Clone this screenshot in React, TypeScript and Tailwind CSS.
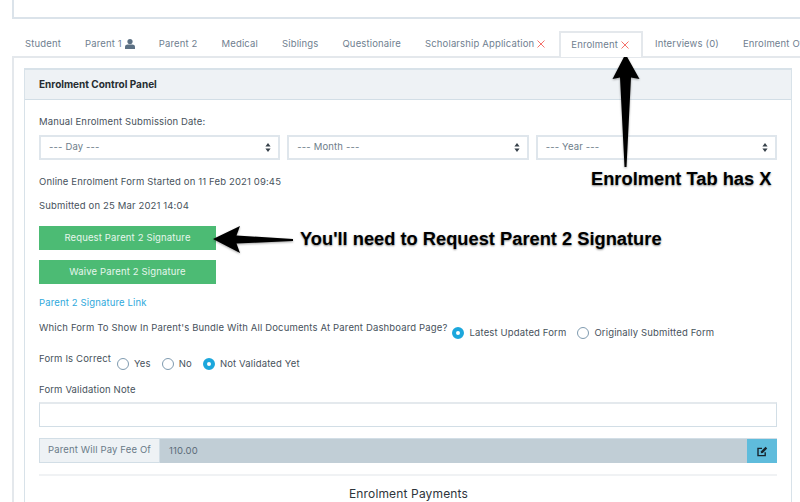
import React from "react";

const tabs = ["Student", "Parent 1", "Parent 2", "Medical", "Siblings", "Questionaire", "Scholarship Application", "Enrolment", "Interviews (0)", "Enrolment Off"];

const SelectBox = ({ label }: { label: string }) => (
  <div className="flex-1 h-[25px] border-2 border-[#dfe6ec] flex items-center justify-between pl-[8px] pr-[7px] text-[#6d7d8a]">
    <span>{label}</span>
    <svg width="6" height="9" viewBox="0 0 6 9" fill="#37414a">
      <path d="M3 0 L5.6 3.4 H0.4 Z M3 9 L5.6 5.6 H0.4 Z" />
    </svg>
  </div>
);

const Radio = ({ on, label }: { on?: boolean; label: string }) => (
  <span className="flex items-center gap-[5px]">
    {on ? (
      <span className="w-[12px] h-[12px] rounded-full border-[4px] border-[#1ca7dc] bg-white" />
    ) : (
      <span className="w-[12px] h-[12px] rounded-full border border-[#7f9bb0] bg-white" />
    )}
    <span>{label}</span>
  </span>
);

const Cross = () => (
  <svg width="8" height="8" viewBox="0 0 8 8" stroke="#f4726c" strokeWidth="1" className="ml-[3px]">
    <path d="M0.5 0.5 L7.5 7.5 M7.5 0.5 L0.5 7.5" />
  </svg>
);

const App = () => {
  return (
    <div className="relative w-[800px] h-[502px] overflow-hidden bg-white text-[9.5px] text-[#47525c] font-['Inter',sans-serif] tracking-[0.15px]">
      {/* top card */}
      <div className="ml-[12px] h-[19px] border-l-2 border-b-2 border-[#dbe3ea]" />

      {/* tabs */}
      <div className="flex ml-[13px] mt-[12px] h-[25px] whitespace-nowrap text-[#6f8090]">
        {tabs.map((t) => (
          <div
            key={t}
            className={
              t === "Enrolment"
                ? "flex items-center pl-[10px] pr-[12px] bg-white border-2 border-b-0 border-[#e4e8ec] h-[26px] relative z-10"
                : t === "Scholarship Application"
                  ? "flex items-center pl-[12px] pr-[14px] pt-[1px]"
                  : "flex items-center px-[12px] pt-[1px]"
            }
          >
            <span>{t}</span>
            {t === "Parent 1" && (
              <svg width="10" height="10" viewBox="0 0 10 10" fill="#5b7083" className="ml-[3px] -mt-[1px]">
                <circle cx="5" cy="2.6" r="2.6" />
                <path d="M0 10 V8 C0 6.4 1.4 5.6 2.6 5.6 H7.4 C8.6 5.6 10 6.4 10 8 V10 Z" />
              </svg>
            )}
            {(t === "Scholarship Application" || t === "Enrolment") && <Cross />}
          </div>
        ))}
      </div>

      {/* tab content */}
      <div className="ml-[12px] border-l-2 border-t-2 border-[#e4e8ec] pl-[10px] pt-[10px] h-[460px]">
        <div className="w-[768px] h-[450px] border-l border-r border-t-2 border-[#d8e2e9]">
          <div className="h-[30px] bg-[#eef2f5] border-b border-[#d2dee6] flex items-center pl-[14px] font-bold text-[#262c31] text-[10px] tracking-normal">
            Enrolment Control Panel
          </div>
          <div className="px-[14px] pt-[15px]">
            <p className="leading-[14px]">Manual Enrolment Submission Date:</p>
            <div className="flex gap-[7px] mt-[6px] w-[738px]">
              <SelectBox label="--- Day ---" />
              <SelectBox label="--- Month ---" />
              <SelectBox label="--- Year ---" />
            </div>
            <p className="mt-[15px] leading-[14px]">Online Enrolment Form Started on 11 Feb 2021 09:45</p>
            <p className="mt-[10px] leading-[14px]">Submitted on 25 Mar 2021 14:04</p>
            <div className="mt-[13px] w-[177px] h-[24px] bg-[#4cbb74] text-[#e6f6ec] flex items-center justify-center">
              Request Parent 2 Signature
            </div>
            <div className="mt-[10px] w-[177px] h-[24px] bg-[#4cbb74] text-[#e6f6ec] flex items-center justify-center">
              Waive Parent 2 Signature
            </div>
            <p className="mt-[12px] leading-[14px] text-[#2fa9dc]">Parent 2 Signature Link</p>
            <div className="flex mt-[11px] items-start">
              <span className="leading-[14px] whitespace-nowrap">Which Form To Show In Parent's Bundle With All Documents At Parent Dashboard Page?</span>
              <div className="flex gap-[11px] ml-[5px] mt-[5px] leading-[14px]">
                <Radio on label="Latest Updated Form" />
                <Radio label="Originally Submitted Form" />
              </div>
            </div>
            <div className="flex mt-[12px] items-start">
              <span className="leading-[14px]">Form Is Correct</span>
              <div className="flex gap-[11px] ml-[6px] mt-[5px] leading-[14px]">
                <Radio label="Yes" />
                <Radio label="No" />
                <Radio on label="Not Validated Yet" />
              </div>
            </div>
            <p className="mt-[12px] leading-[14px]">Form Validation Note</p>
            <div className="mt-[5px] w-[738px] h-[25px] border border-[#d2dee6] border-t-2 border-t-[#e4e9ed]" />
            <div className="flex mt-[11px] w-[738px] h-[25px] border-t border-[#d2dee6]">
              <div className="w-[121px] bg-[#eef2f5] border border-t-0 border-[#d2dee6] flex items-center justify-center text-[#6a7a88]">Parent Will Pay Fee Of</div>
              <div className="flex-1 bg-[#c1ced6] flex items-center pl-[9px] text-[#5b6b78]">110.00</div>
              <div className="w-[30px] bg-[#5fbcdc] flex items-center justify-center">
                <svg width="11" height="11" viewBox="0 0 11 11" fill="none" stroke="#17242c" strokeWidth="1.4">
                  <path d="M8.2 6.2 V9.6 H1 V2.4 H5" />
                  <path d="M3.8 7.2 L4.1 5.2 L8.6 0.8 L10.2 2.4 L5.8 6.9 Z" fill="#17242c" stroke="none" />
                </svg>
              </div>
            </div>
            <div className="mt-[11px] w-[738px] border-t-2 border-[#f0f2f4]" />
            <p className="mt-[11px] w-[739px] text-center text-[12px] leading-[14px] text-[#2e353b]">Enrolment Payments</p>
          </div>
        </div>
      </div>

      {/* annotations */}
      <svg className="absolute left-0 top-0 pointer-events-none" width="800" height="502" viewBox="0 0 800 502" style={{ filter: "drop-shadow(0 1px 1px rgba(0,0,0,0.35))" }}>
        <path d="M625.5 54 L639.5 79 L631 77.5 L626.5 167 L624.5 167 L620 77.5 L612.5 79 Z" fill="#000" />
        <path d="M213 239 L240 226 L236.5 235.5 L293 239 L293 241 L236.5 243.5 L240 253 Z" fill="#000" />
      </svg>
      <span className="absolute left-[591px] top-[169px] font-['Liberation_Sans',sans-serif] font-bold text-[18.3px] leading-[20px] text-black tracking-normal [text-shadow:0_1px_2px_rgba(0,0,0,0.45)] whitespace-nowrap">
        Enrolment Tab has X
      </span>
      <span className="absolute left-[300px] top-[229px] font-['Liberation_Sans',sans-serif] font-bold text-[18.3px] leading-[20px] text-black tracking-normal [text-shadow:0_1px_2px_rgba(0,0,0,0.45)] whitespace-nowrap">
        You'll need to Request Parent 2 Signature
      </span>
    </div>
  );
};

export default App;
